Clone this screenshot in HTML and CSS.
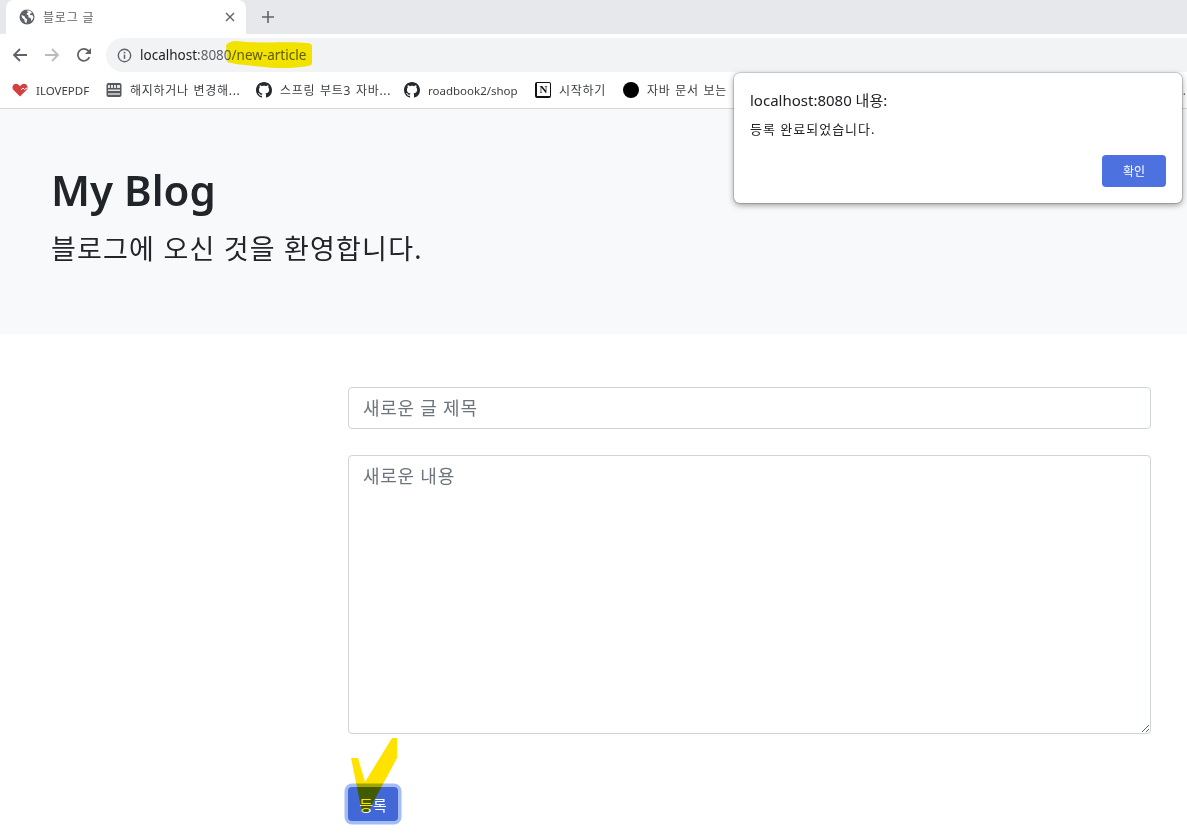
FILE: index.html
```html
<!DOCTYPE html>
<html lang="ko">
<head>
<meta charset="utf-8">
<title>블로그 글</title>
<link rel="stylesheet" href="styles.css">
</head>
<body>
<header class="chrome">
  <div class="tabstrip">
    <div class="tab">
      <svg class="tab-globe" viewBox="0 0 16 16"><circle cx="8" cy="8" r="7.5" fill="#5f6368"/><path d="M2.5 6l3 1.2 1 2.3 1.6.6-.6 4-1.6-.8-.5-2.6L3 8.5zM7.5 1.6l3.6.2 2 2.2-1.8.4-.4 1.6 2.7.3.9 1.7-1 2.7-1.3 1.2-.4-2.6-2.4-1.1-.1-2.1-1.6-.6.2-1.6 1.6-.4z" fill="#fff"/></svg>
      <span class="tab-title">블로그 글</span>
      <svg class="tab-close" viewBox="0 0 10 10"><path d="M1 1l8 8M9 1l-8 8" stroke="#5f6368" stroke-width="1.4" fill="none"/></svg>
    </div>
    <svg class="new-tab" viewBox="0 0 12 12"><path d="M6 0v12M0 6h12" stroke="#5f6368" stroke-width="1.6" fill="none"/></svg>
  </div>
  <div class="toolbar">
    <svg class="nav-icon" viewBox="0 0 16 16"><path d="M15 8H2M8 2L2 8l6 6" stroke="#5f6368" stroke-width="1.8" fill="none"/></svg>
    <svg class="nav-icon" viewBox="0 0 16 16"><path d="M1 8h13M8 2l6 6-6 6" stroke="#b9bcc1" stroke-width="1.8" fill="none"/></svg>
    <svg class="nav-icon" viewBox="0 0 16 16"><path d="M13.4 10.2A6 6 0 1 1 12.2 3.6L14.6 6" stroke="#5f6368" stroke-width="1.8" fill="none"/><path d="M15 1v6H9z" fill="#5f6368"/></svg>
    <div class="omnibox">
      <svg class="info" viewBox="0 0 16 16"><circle cx="8" cy="8" r="6.6" stroke="#5f6368" stroke-width="1.5" fill="none"/><path d="M8 7v4.6" stroke="#5f6368" stroke-width="1.6"/><circle cx="8" cy="4.9" r="1" fill="#5f6368"/></svg>
      <span class="url"><span class="host">localhost</span>:8080/new-article</span>
    </div>
  </div>
  <nav class="bookmarks">
    <a class="bm">
      <svg class="bm-icon" viewBox="0 0 16 16"><path d="M8 14.5L1 7.6C-.6 4.6 1.6 1.8 4 1.8c1.700 0 3 .9 4 2.400 1-1.500 2.300-2.400 4-2.400 2.400 0 4.600 2.800 3 5.800z" fill="#d2403f"/><path d="M9 8l2-2 1.500 1.500L15 6" stroke="#fff" stroke-width="1" fill="none"/></svg>
      <span class="bm-text w-pdf">ILOVEPDF</span>
    </a>
    <a class="bm">
      <svg class="bm-icon" viewBox="0 0 16 16"><rect x="0.500" y="1" width="15" height="14" rx="2" fill="#55585c"/><path d="M2 3h2v3H2zM5 3h2v3H5zM8 3h2v3H8zM11 3h3v3h-3zM2 7.500h12v1.500H2z" fill="#e4e4e4"/><rect x="2" y="11" width="12" height="2" fill="#b8b8b8"/></svg>
      <span class="bm-text bm-ko w-cancel">해지하거나 변경해...</span>
    </a>
    <a class="bm">
      <svg class="bm-icon" viewBox="0 0 16 16"><path class="gh" d="M8 0C3.580 0 0 3.580 0 8c0 3.540 2.290 6.530 5.470 7.590.4.070.55-.17.55-.38 0-.19-.01-.82-.01-1.490-2.010.37-2.530-.49-2.690-.94-.09-.23-.48-.94-.82-1.130-.28-.15-.68-.52-.01-.53.63-.01 1.080.58 1.230.82.72 1.210 1.870.87 2.330.66.07-.52.28-.87.51-1.070-1.780-.2-3.640-.89-3.640-3.950 0-.87.31-1.590.82-2.150-.08-.2-.36-1.020.08-2.120 0 0 .67-.21 2.200.82.64-.18 1.320-.27 2-.27.68 0 1.360.09 2 .27 1.530-1.040 2.200-.82 2.200-.82.44 1.100.16 1.920.08 2.120.51.56.82 1.270.82 2.150 0 3.070-1.870 3.750-3.650 3.950.29.25.54.73.54 1.480 0 1.070-.01 1.930-.01 2.200 0 .21.15.46.55.38A8.013 8.013 0 0016 8c0-4.420-3.580-8-8-8z"/></svg>
      <span class="bm-text bm-ko w-spring">스프링 부트3 자바...</span>
    </a>
    <a class="bm">
      <svg class="bm-icon" viewBox="0 0 16 16"><path class="gh" d="M8 0C3.580 0 0 3.580 0 8c0 3.540 2.290 6.530 5.470 7.590.4.070.55-.17.55-.38 0-.19-.01-.82-.01-1.490-2.010.37-2.530-.49-2.690-.94-.09-.23-.48-.94-.82-1.130-.28-.15-.68-.52-.01-.53.63-.01 1.080.58 1.230.82.72 1.210 1.870.87 2.330.66.07-.52.28-.87.51-1.070-1.780-.2-3.640-.89-3.640-3.950 0-.87.31-1.590.82-2.150-.08-.2-.36-1.020.08-2.120 0 0 .67-.21 2.200.82.64-.18 1.320-.27 2-.27.68 0 1.360.09 2 .27 1.530-1.040 2.200-.82 2.200-.82.44 1.100.16 1.920.08 2.120.51.56.82 1.270.82 2.150 0 3.070-1.870 3.750-3.650 3.950.29.25.54.73.54 1.480 0 1.070-.01 1.930-.01 2.200 0 .21.15.46.55.38A8.013 8.013 0 0016 8c0-4.420-3.580-8-8-8z"/></svg>
      <span class="bm-text w-road">roadbook2/shop</span>
    </a>
    <a class="bm">
      <span class="notion">N</span>
      <span class="bm-text bm-ko w-start">시작하기</span>
    </a>
    <a class="bm">
      <span class="dot"></span>
      <span class="bm-text bm-ko w-java">자바 문서 보는</span>
    </a>
    <span class="bm-next"></span>
    <span class="bm-more">..</span>
  </nav>
</header>

<main class="page">
  <section class="hero">
    <h1 class="hero-title">My Blog</h1>
    <h2 class="hero-sub">블로그에 오신 것을 환영합니다.</h2>
  </section>
  <form class="article-form">
    <input class="field field-title" type="text" placeholder="새로운 글 제목">
    <textarea class="field field-body" placeholder="새로운 내용"></textarea>
    <button class="submit" type="button">등록</button>
  </form>
</main>

<div class="dialog" role="alertdialog">
  <div class="dialog-title">localhost:8080 내용:</div>
  <div class="dialog-msg">등록 완료되었습니다.</div>
  <div class="dialog-actions"><button class="dialog-ok" type="button">확인</button></div>
</div>

<svg class="marks" viewBox="0 0 1187 834">
  <path class="mark mark-url" d="M226 45 C229 42 232 41 236 41 C262 44 290 41 306 43 C310 43 312 44 312 47 L312 63 C312 66 308 66 300 67 C288 69 270 68 254 66 C244 65 234 64 227 62 Z"/>
  <path class="mark mark-check" d="M351 758 L358 758 L365 782 L392 738 L397 738 L397 758 L368 812 L362 812 Z"/>
</svg>
</body>
</html>
```

FILE: styles.css
```css
* { box-sizing: border-box; }
html, body { margin: 0; padding: 0; }
body {
  width: 1187px;
  height: 834px;
  overflow: hidden;
  position: relative;
  background: #fff;
  color: #212529;
  font-family: "Noto Sans", "Noto Sans CJK KR", sans-serif;
}

/* browser chrome */
.chrome { display: flex; flex-direction: column; }
.tabstrip {
  height: 34px;
  background: #e7e8ec;
  display: flex;
  align-items: center;
  padding-left: 6px;
}
.tab {
  width: 240px;
  height: 34px;
  background: #fff;
  border-radius: 8px 8px 0 0;
  display: flex;
  align-items: center;
  padding: 0 11px 0 13px;
}
.tab-globe { width: 16px; height: 16px; flex: none; }
.tab-title {
  margin-left: 8px;
  flex: 1;
  font-size: 12px;
  letter-spacing: .8px;
  color: #5f6368;
}
.tab-close { width: 10px; height: 10px; flex: none; }
.new-tab { width: 12px; height: 12px; margin-left: 16px; }

.toolbar {
  height: 38px;
  background: #fff;
  display: flex;
  align-items: flex-start;
  padding: 4px 0 0 12px;
}
.nav-icon { width: 16px; height: 16px; margin: 9px 16px 0 0; flex: none; }
.nav-icon:nth-child(3) { margin-right: 14px; }
.omnibox {
  flex: 1;
  height: 34px;
  background: #f1f3f4;
  border-radius: 17px 0 0 17px;
  display: flex;
  align-items: center;
  padding-left: 11px;
}
.info { width: 15px; height: 15px; flex: none; }
.url { margin-left: 8px; font-size: 13.5px; color: #5f6368; }
.host { color: #202124; }

.bookmarks {
  height: 37px;
  background: #fff;
  border-bottom: 1px solid #d6d8db;
  display: flex;
  align-items: center;
  gap: 16px;
  padding: 0 0 0 12px;
}
.bm { display: flex; align-items: center; gap: 8px; }
.bm-icon { width: 16px; height: 16px; flex: none; }
.gh { fill: #24292e; }
.bm-text {
  font-size: 11.5px;
  color: #3c4043;
  white-space: nowrap;
}
.bm-ko { font-size: 12px; letter-spacing: .7px; word-spacing: 1px; }
.w-pdf { width: 54px; }
.w-cancel { width: 110px; }
.w-spring { width: 108px; }
.w-road { width: 91px; }
.w-start { width: 48px; }
.w-java { width: 80px; }
.notion {
  width: 16px;
  height: 16px;
  flex: none;
  border: 1.5px solid #111;
  border-width: 1.5px 1.5px 2.5px 2.5px;
  border-radius: 2px;
  background: #fff;
  font: bold 11px/12px "Liberation Serif", serif;
  color: #111;
  text-align: center;
}
.dot { width: 16px; height: 16px; flex: none; border-radius: 50%; background: #000; }
.bm-next { width: 8px; height: 8px; margin-left: -5px; background: #f3d3ae; flex: none; }
.bm-more { margin-left: auto; padding-right: 1px; font-size: 12px; color: #5f6368; }

/* page */
.hero {
  height: 225px;
  background: #f8f9fa;
  padding: 50px 51px 0;
}
.hero-title {
  margin: 0;
  font-size: 42px;
  line-height: 62px;
  font-weight: 600;
}
.hero-sub {
  margin: 2px 0 0;
  font-size: 27px;
  line-height: 52px;
  font-weight: 400;
  letter-spacing: 1.2px;
}
.article-form {
  display: flex;
  flex-direction: column;
  align-items: flex-start;
  padding: 53px 36px 0 348px;
}
.field {
  display: block;
  width: 100%;
  border: 1px solid #ced4da;
  border-radius: 4px;
  background: #fff;
  padding: 7px 14px;
  font-family: inherit;
  font-size: 18px;
  line-height: 26px;
  letter-spacing: .75px;
  color: #212529;
}
.field::placeholder { color: #6c757d; opacity: 1; }
.field-title { height: 42px; }
.field-body { height: 279px; margin-top: 26px; }
.submit {
  width: 50px;
  height: 34px;
  margin-top: 53px;
  border: 0;
  border-radius: 4px;
  background: #4267d6;
  box-shadow: 0 0 0 3.5px #a4bcf5;
  color: #fff;
  font-family: inherit;
  font-size: 15px;
  padding: 0;
}

/* alert dialog */
.dialog {
  position: absolute;
  left: 734px;
  top: 73px;
  width: 448px;
  height: 130px;
  background: #fff;
  border-radius: 6px;
  box-shadow: 0 0 0 1px rgba(0,0,0,.14), 0 2px 6px rgba(0,0,0,.4);
  padding: 16px 16px 0;
  display: flex;
  flex-direction: column;
}
.dialog-title { font-size: 15px; line-height: 22px; color: #202124; }
.dialog-msg { margin-top: 9px; font-size: 13px; line-height: 18px; letter-spacing: 1px; color: #202124; }
.dialog-actions { margin-top: 17px; display: flex; justify-content: flex-end; }
.dialog-ok {
  width: 64px;
  height: 32px;
  border: 0;
  border-radius: 4px;
  background: #4d72e0;
  color: #fff;
  font-family: inherit;
  font-size: 12px;
  padding: 0;
}

/* highlighter annotations drawn on top of the screenshot */
.marks {
  position: absolute;
  left: 0;
  top: 0;
  width: 1187px;
  height: 834px;
  pointer-events: none;
}
.mark { mix-blend-mode: multiply; }
.mark-url { fill: #ffee00; }
.mark-check { fill: #ffe200; }
```
